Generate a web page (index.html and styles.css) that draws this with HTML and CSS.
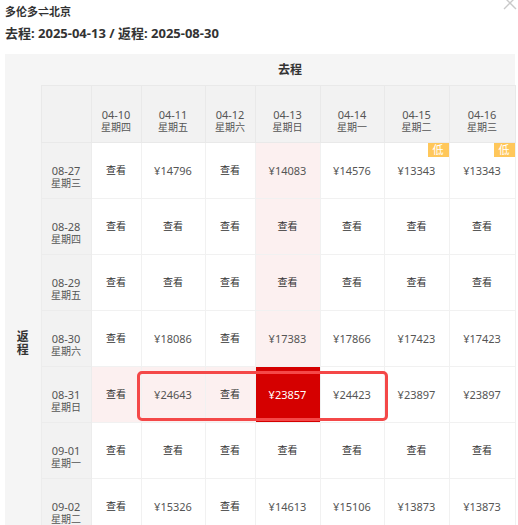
FILE: index.html
```html
<!DOCTYPE html>
<html lang="zh-CN">
<head>
  <meta charset="UTF-8" />
  <title>往返低价日历</title>
  <link rel="stylesheet" href="styles.css">
</head>
<body>
  <button class="close-btn" aria-label="关闭">
    <svg width="14" height="14" viewBox="0 0 14 14"><path d="M1 1 L13 13 M13 1 L1 13" stroke="#c9c9c9" stroke-width="1.4" fill="none"/></svg>
  </button>

  <div class="route">多伦多⇌北京</div>
  <div class="trip">去程: 2025-04-13 / 返程: 2025-08-30</div>

  <table class="calendar">
    <colgroup>
      <col style="width:36px"><col style="width:50px">
      <col style="width:50px"><col style="width:64px"><col style="width:50px"><col style="width:65px">
      <col style="width:64px"><col style="width:65px"><col style="width:66px">
    </colgroup>
    <tr class="top-row">
      <td class="outer" rowspan="2"></td>
      <td class="outer"></td>
      <td class="outer go-title" colspan="7">去程</td>
    </tr>
    <tr class="date-row">
      <th class="blank"></th>
      <th><div class="d">04-10</div><div class="w">星期四</div></th>
      <th><div class="d">04-11</div><div class="w">星期五</div></th>
      <th><div class="d">04-12</div><div class="w">星期六</div></th>
      <th><div class="d">04-13</div><div class="w">星期日</div></th>
      <th><div class="d">04-14</div><div class="w">星期一</div></th>
      <th><div class="d">04-15</div><div class="w">星期二</div></th>
      <th><div class="d">04-16</div><div class="w">星期三</div></th>
    </tr>
    <tr>
      <td class="outer back-title" rowspan="7">返<br>程</td>
      <td class="label"><div class="d">08-27</div><div class="w">星期三</div></td>
      <td class="view">查看</td>
      <td class="price">¥14796</td>
      <td class="view">查看</td>
      <td class="price hl">¥14083</td>
      <td class="price">¥14576</td>
      <td class="price"><span class="low">低</span>¥13343</td>
      <td class="price"><span class="low">低</span>¥13343</td>
    </tr>
    <tr>
      <td class="label"><div class="d">08-28</div><div class="w">星期四</div></td>
      <td class="view">查看</td>
      <td class="view">查看</td>
      <td class="view">查看</td>
      <td class="view hl">查看</td>
      <td class="view">查看</td>
      <td class="view">查看</td>
      <td class="view">查看</td>
    </tr>
    <tr>
      <td class="label"><div class="d">08-29</div><div class="w">星期五</div></td>
      <td class="view">查看</td>
      <td class="view">查看</td>
      <td class="view">查看</td>
      <td class="view hl">查看</td>
      <td class="view">查看</td>
      <td class="view">查看</td>
      <td class="view">查看</td>
    </tr>
    <tr>
      <td class="label"><div class="d">08-30</div><div class="w">星期六</div></td>
      <td class="view">查看</td>
      <td class="price">¥18086</td>
      <td class="view">查看</td>
      <td class="price hl">¥17383</td>
      <td class="price">¥17866</td>
      <td class="price">¥17423</td>
      <td class="price">¥17423</td>
    </tr>
    <tr>
      <td class="label"><div class="d">08-31</div><div class="w">星期日</div></td>
      <td class="view hl">查看</td>
      <td class="price hl"><span class="mark"></span>¥24643</td>
      <td class="view hl">查看</td>
      <td class="price selected">¥23857</td>
      <td class="price">¥24423</td>
      <td class="price">¥23897</td>
      <td class="price">¥23897</td>
    </tr>
    <tr>
      <td class="label"><div class="d">09-01</div><div class="w">星期一</div></td>
      <td class="view">查看</td>
      <td class="view">查看</td>
      <td class="view">查看</td>
      <td class="view">查看</td>
      <td class="view">查看</td>
      <td class="view">查看</td>
      <td class="view">查看</td>
    </tr>
    <tr>
      <td class="label"><div class="d">09-02</div><div class="w">星期二</div></td>
      <td class="view">查看</td>
      <td class="price">¥15326</td>
      <td class="view">查看</td>
      <td class="price">¥14613</td>
      <td class="price">¥15106</td>
      <td class="price">¥13873</td>
      <td class="price">¥13873</td>
    </tr>
  </table>
</body>
</html>
```

FILE: styles.css
```css
html, body {
  height: 100%;
  overflow: hidden;
}
body {
  margin: 0;
  padding: 0 3px 0 5px;
  font-family: "Noto Sans", "Noto Sans CJK SC", sans-serif;
  color: #333;
  background: white;
  position: relative;
}

/* Close button in the corner */
.close-btn {
  position: absolute;
  top: -4px;
  right: 1px;
  padding: 0;
  border: none;
  background: none;
  cursor: pointer;
}

.route {
  font-size: 11px;
  font-weight: bold;
  line-height: 16px;
  margin-top: 4px;
}
.trip {
  font-size: 13px;
  font-weight: bold;
  line-height: 18px;
  margin-top: 4px;
  margin-bottom: 12px;
}

/* Calendar table */
.calendar {
  border-collapse: collapse;
  table-layout: fixed;
  width: 510px;
}
.calendar td, .calendar th {
  padding: 0;
  text-align: center;
  font-weight: normal;
  line-height: 13px;
}
.outer {
  background: #f5f5f5;
}
.top-row td {
  height: 31px;
}
.go-title {
  text-align: left !important;
  padding-left: 187px !important;
  font-size: 12px;
  font-weight: bold !important;
  color: #333;
}
.back-title {
  font-size: 12px;
  font-weight: bold !important;
  padding-top: 8px !important;
  vertical-align: middle;
}

.date-row th {
  height: 34px;
  background: #f2f2f2;
  border: 1px solid #e9e9e9;
  vertical-align: top;
  padding-top: 22px;
  color: #555;
}
.d {
  font-size: 11px;
  line-height: 13px;
}
.w {
  font-size: 10px;
  line-height: 13px;
}

.calendar tr td.label {
  height: 34px;
  background: #f2f2f2;
  border: 1px solid #ececec;
  vertical-align: top;
  padding-top: 21px;
  color: #555;
}
.view, .price {
  position: relative;
  border: 1px solid #f1f1f1;
  vertical-align: middle;
  background: white;
}
.view {
  font-size: 10px;
  color: #333;
}
.price {
  font-size: 11px;
  color: #555;
}
.hl {
  background: #fcf0f0;
}
.selected {
  background: #d50000;
  color: white;
}

/* "low price" badge */
.low {
  position: absolute;
  top: 0;
  right: 0;
  width: 21px;
  height: 14px;
  line-height: 14px;
  background: #ffc75a;
  color: white;
  font-size: 11px;
}

/* Highlight frame around the chosen range */
.mark {
  position: absolute;
  left: -5px;
  top: 4px;
  width: 245px;
  height: 44px;
  border: 3px solid #f44848;
  border-radius: 5px;
  z-index: 2;
  pointer-events: none;
}
```
